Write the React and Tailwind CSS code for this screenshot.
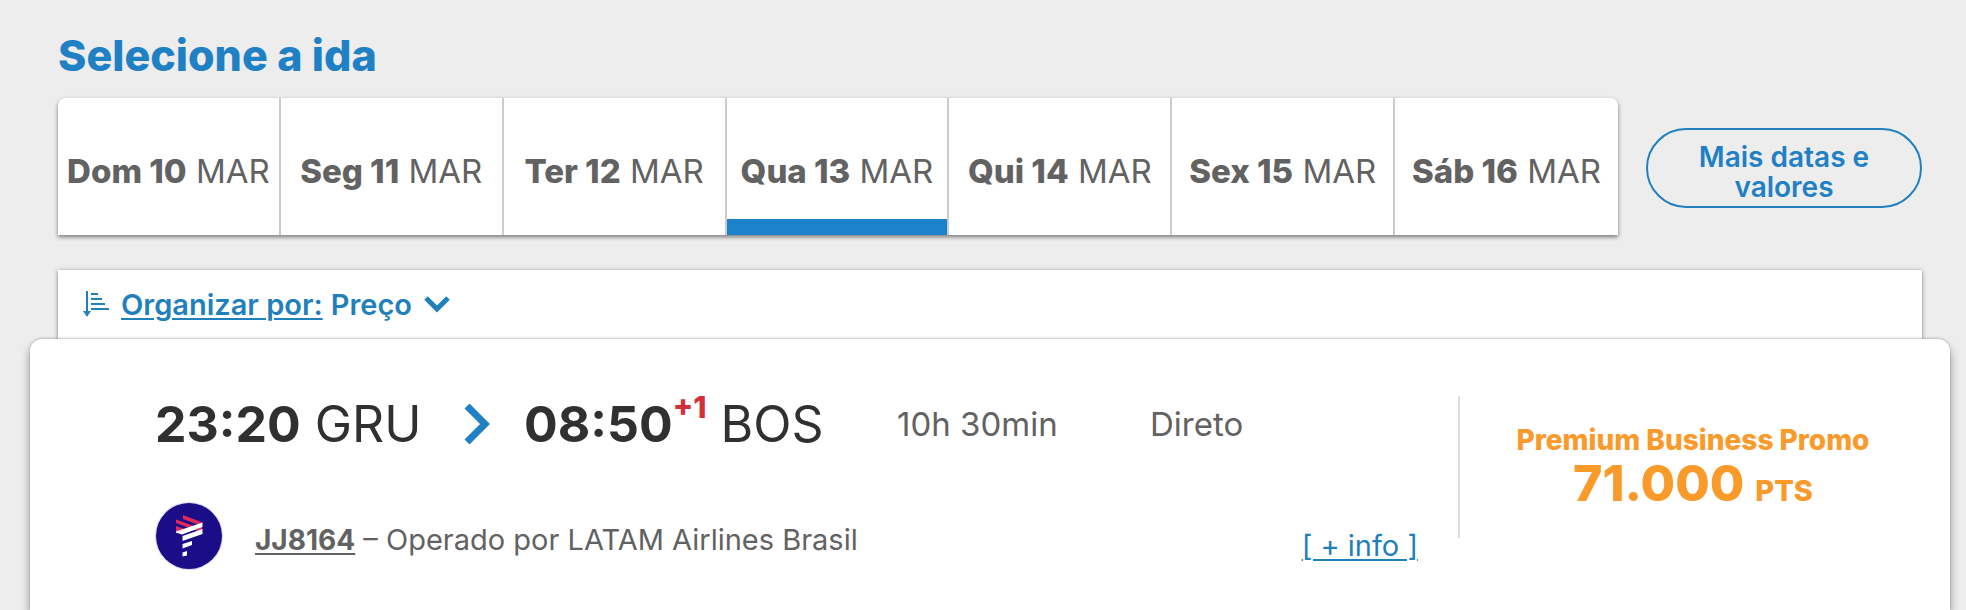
import clsx from "clsx";

const days = [
  { id: "dom", label: "Dom 10", month: "MAR" },
  { id: "seg", label: "Seg 11", month: "MAR" },
  { id: "ter", label: "Ter 12", month: "MAR" },
  { id: "qua", label: "Qua 13", month: "MAR", selected: true },
  { id: "qui", label: "Qui 14", month: "MAR" },
  { id: "sex", label: "Sex 15", month: "MAR" },
  { id: "sab", label: "Sáb 16", month: "MAR" },
];

function SortIcon() {
  return (
    <svg
      viewBox="0 0 26 30"
      className="w-[26px] h-[30px] shrink-0"
      fill="none"
      stroke="currentColor"
      strokeWidth="2"
      aria-hidden="true"
    >
      <path d="M4 1v22" />
      <path d="M0 21h8l-4 6z" fill="currentColor" stroke="none" />
      <path d="M8 4h7M8 9h11M8 14h14M8 19h18" />
    </svg>
  );
}

function ChevronDown() {
  return (
    <svg
      viewBox="0 0 26 18"
      className="w-[26px] h-[18px] shrink-0"
      fill="none"
      stroke="currentColor"
      strokeWidth="5"
      aria-hidden="true"
    >
      <path d="M2 2l11 11L24 2" />
    </svg>
  );
}

function ChevronRight() {
  return (
    <svg
      viewBox="0 0 26 40"
      className="w-[26px] h-10 text-[#1f80c4]"
      fill="none"
      stroke="currentColor"
      strokeWidth="7"
      aria-hidden="true"
    >
      <path d="M3 2l18 18L3 38" />
    </svg>
  );
}

function LatamLogo() {
  return (
    <svg
      viewBox="0 0 68 68"
      className="w-[68px] h-[68px] shrink-0"
      role="img"
      aria-label="LATAM"
    >
      <circle cx="34" cy="34" r="34" fill="#dcd8f5" />
      <circle cx="34" cy="34" r="33" fill="#1b0c88" />
      <g fill="#e0295a">
        <path d="M28 13l19.500 7.500-5 2L28 17z" />
        <path d="M21 17.500l18 6.500-5 2-13-5z" />
        <path d="M21 24l10 3.500-10 4z" />
        <path d="M39 27.500l8-3V29l-3 1z" />
      </g>
      <g fill="#fff">
        <path d="M21 29.500l26.500-9V25L27 32.500l-6-2z" />
        <path d="M27.500 34l20-7v5l-20 7z" />
        <path d="M27.500 42l9.500-3v4l-9.500 3.500z" />
        <path d="M27.500 50.500l4.500-1.500v4.500l-4.500 1z" />
      </g>
    </svg>
  );
}

function DayTabs() {
  return (
    <div
      role="tablist"
      aria-label="Datas de ida"
      className="flex-1 grid grid-cols-7 h-[137px] rounded-t-lg overflow-hidden bg-white divide-x-2 divide-[#cccccc]"
    >
      {days.map((day) => (
        <button
          key={day.id}
          type="button"
          role="tab"
          aria-selected={Boolean(day.selected)}
          className={clsx(
            "pt-2 text-[33px] leading-10 text-[#626262] whitespace-nowrap",
            day.selected && "shadow-[inset_0_-16px_#1c82c9]"
          )}
        >
          <span className="font-extrabold">{day.label}</span> {day.month}
        </button>
      ))}
    </div>
  );
}

function FlightCard() {
  return (
    <article className="relative flex-1 flex items-start bg-white rounded-t-xl pt-[57px] pl-[125px] shadow-[0_6px_10px_rgba(0,0,0,0.4),0_-1px_2px_rgba(0,0,0,0.18)]">
      <div className="flex-1 pr-10">
        <div className="flex items-center h-14 text-[50px] leading-none text-[#303030]">
          <p className="w-[309px] whitespace-nowrap">
            <strong>23:20</strong> GRU
          </p>
          <div className="w-[60px]">
            <ChevronRight />
          </div>
          <p className="w-[373px] whitespace-nowrap">
            <strong>08:50</strong>
            <sup className="text-[30px] font-extrabold text-[#d42e38] -top-6">
              +1
            </sup>{" "}
            BOS
          </p>
          <p className="w-[253px] text-[33px] text-[#626262]">10h 30min</p>
          <p className="text-[33px] text-[#626262]">Direto</p>
        </div>
        <div className="flex items-center justify-between mt-[50px]">
          <div className="flex items-center gap-8 text-[29px] text-[#626262]">
            <LatamLogo />
            <p className="pt-2">
              <a
                href="#voo"
                className="text-[28px] font-bold underline decoration-2 underline-offset-3"
              >
                JJ8164
              </a>{" "}
              – Operado por LATAM Airlines Brasil
            </p>
          </div>
          <a
            href="#info"
            className="pt-5 text-[29px] text-[#1f80bb] underline decoration-2 underline-offset-3"
          >
            [ + info ]
          </a>
        </div>
      </div>
      <div className="w-[492px] h-[142px] border-l-2 border-[#dedede] pt-[26px] pr-6 text-center font-extrabold text-[#f99a2b]">
        <h2 className="text-[28px] leading-9">Premium Business Promo</h2>
        <p className="text-[50px] leading-[50px]">
          71.000 <span className="text-[29px]">PTS</span>
        </p>
      </div>
    </article>
  );
}

export default function App() {
  return (
    <main className="min-h-screen flex flex-col bg-[#ededed] pl-[30px] pr-4 pt-7 font-['Inter',sans-serif]">
      <section className="px-7">
        <h1 className="text-[43px] leading-[54px] font-extrabold text-[#1f80c4]">
          Selecione a ida
        </h1>
        <div className="flex items-center gap-7 mt-4">
          <div className="flex-1 rounded-t-lg shadow-[0_2px_4px_rgba(0,0,0,0.5)]">
            <DayTabs />
          </div>
          <button
            type="button"
            className="w-[276px] h-20 mt-[2px] rounded-full border-2 border-[#1f80bb] px-10 pt-2 text-[28px] leading-[30px] font-semibold text-[#1f80c4]"
          >
            Mais datas e valores
          </button>
        </div>
        <div className="flex items-center gap-3 h-[69px] mt-[35px] pl-[25px] bg-white text-[29px] font-semibold text-[#1f80bb] shadow-[0_1px_4px_rgba(0,0,0,0.5)]">
          <SortIcon />
          <button type="button" className="flex items-center gap-3">
            <span className="flex gap-2">
              <span className="underline decoration-2 underline-offset-3">
                Organizar por:
              </span>
              <span>Preço</span>
            </span>
            <ChevronDown />
          </button>
        </div>
      </section>
      <FlightCard />
    </main>
  );
}
